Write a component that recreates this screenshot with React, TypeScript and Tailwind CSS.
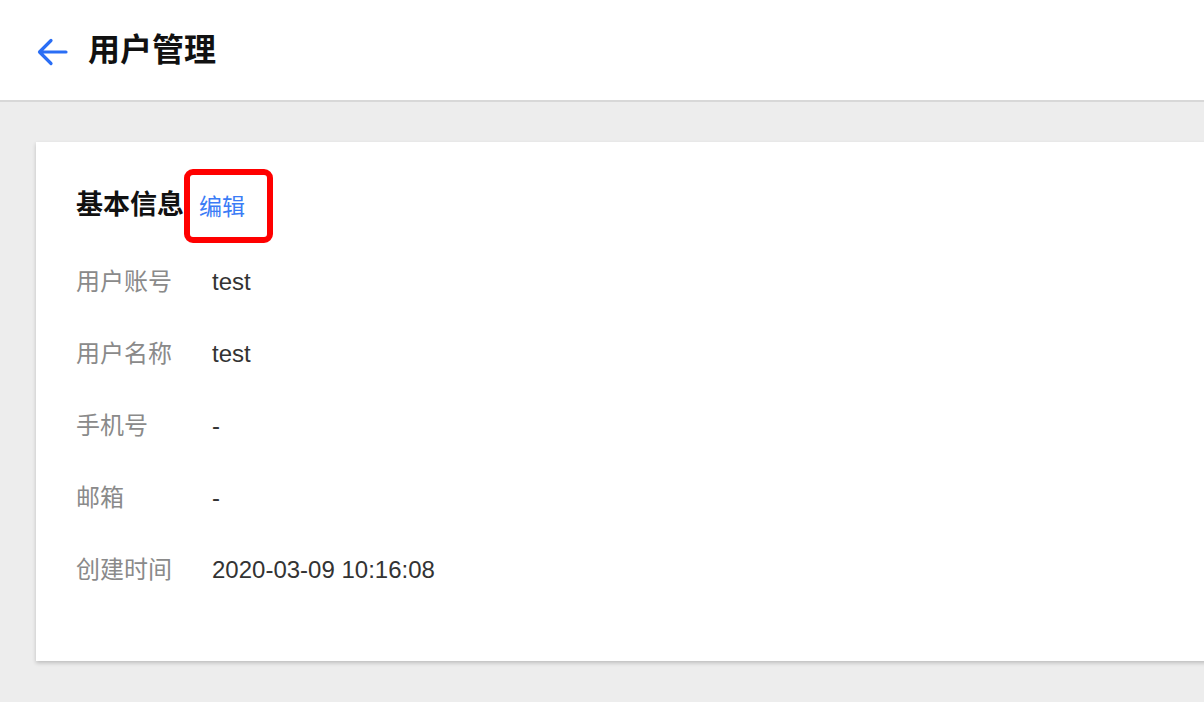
import React from 'react'

const rows = [
  { label: '用户账号', value: 'test' },
  { label: '用户名称', value: 'test' },
  { label: '手机号', value: '-' },
  { label: '邮箱', value: '-' },
  { label: '创建时间', value: '2020-03-09 10:16:08' },
]

const font = { fontFamily: '"Liberation Sans", "Noto Sans CJK SC", sans-serif' }

export default function App() {
  return (
    <div className="min-h-[702px] bg-[#ededed] overflow-hidden" style={font}>
      {/* Header */}
      <div className="h-[102px] bg-white border-b-2 border-[#d8d8d8] flex items-center pl-[36px]">
        <svg width="32" height="32" viewBox="0 0 32 32" className="mr-[20px] mt-[4px]">
          <path d="M30 16H4M15 4.5L3.5 16L15 27.5" fill="none" stroke="#2a6ef5" strokeWidth="3.2" strokeLinecap="round" strokeLinejoin="round" />
        </svg>
        <h1 className="text-[32px] font-bold text-[#111] leading-none">用户管理</h1>
      </div>

      {/* Card */}
      <div className="mt-[40px] ml-[36px] mr-[-40px] bg-white shadow-[0_2px_4px_rgba(0,0,0,0.2)] pt-[45px] pb-[55px] pl-[40px]">
        <div className="flex items-center h-[36px]">
          <h2 className="text-[27px] font-bold text-[#111] leading-none">基本信息</h2>
          <span className="relative ml-[15px] text-[23px] text-[#3b7cf6] leading-none mt-[4px]">
            编辑
            <span className="absolute left-[-15px] top-[-27px] w-[89px] h-[74px] border-[6px] border-[#ff0000] rounded-[9px]"></span>
          </span>
        </div>
        <div className="mt-[23px] flex flex-col">
          {rows.map((r) => (
            <div key={r.label} className="h-[72px] flex items-center">
              <span className="w-[136px] text-[24px] text-[#8a8a8a]">{r.label}</span>
              <span className="text-[24px] text-[#333]">{r.value}</span>
            </div>
          ))}
        </div>
      </div>
    </div>
  )
}
